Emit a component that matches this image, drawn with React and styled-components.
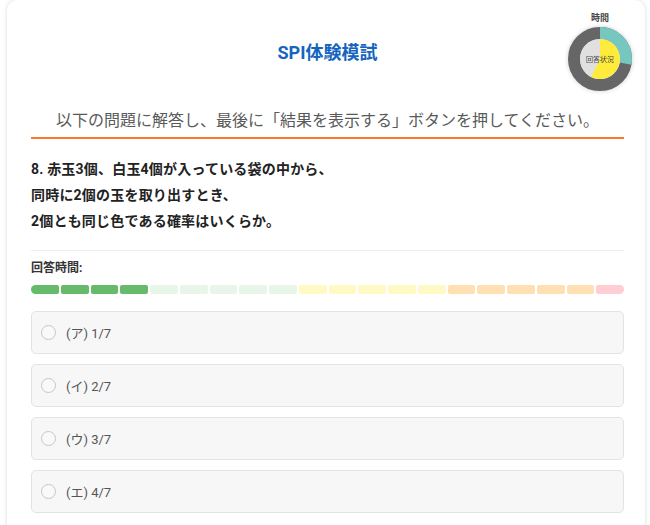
import { createGlobalStyle, styled } from 'styled-components'

const GlobalStyle = createGlobalStyle`
  body {
    margin: 0;
    background: #ffffff;
    font-family: Roboto, 'Noto Sans CJK JP', sans-serif;
    color: #222222;
  }
`

const segments = [
  ...Array(4).fill('#66bb6a'),
  ...Array(5).fill('#e8f5e9'),
  ...Array(5).fill('#fff9c4'),
  ...Array(5).fill('#ffe0b2'),
  '#ffcdd2',
]

const options = ['(ア) 1/7', '(イ) 2/7', '(ウ) 3/7', '(エ) 4/7']

const TimerChart = () => (
  <Timer>
    <TimerLabel>時間</TimerLabel>
    <Donut>
      <svg width="64" height="64" viewBox="0 0 64 64">
        <circle cx="32" cy="32" r="26" fill="none" stroke="#666666" strokeWidth="12" />
        <circle
          cx="32"
          cy="32"
          r="26"
          fill="none"
          stroke="#76c7c0"
          strokeWidth="12"
          strokeDasharray="45.4 200"
          transform="rotate(-90 32 32)"
        />
        <circle cx="32" cy="32" r="20" fill="#e0e0e0" />
        <path d="M32 32 L32 12 A20 20 0 1 1 23.05 49.89 Z" fill="#ffeb3b" />
      </svg>
      <DonutText>回答状況</DonutText>
    </Donut>
  </Timer>
)

export default function App() {
  return (
    <>
      <GlobalStyle />
      <Card>
        <TimerChart />
        <Header>
          <Title>SPI体験模試</Title>
          <Instruction>
            以下の問題に解答し、最後に「結果を表示する」ボタンを押してください。
          </Instruction>
        </Header>

        <Question>
          8. 赤玉3個、白玉4個が入っている袋の中から、
          <br />
          同時に2個の玉を取り出すとき、
          <br />
          2個とも同じ色である確率はいくらか。
        </Question>

        <TimeLabel>回答時間:</TimeLabel>
        <TimeBar>
          {segments.map((color, i) => (
            <Segment key={i} $color={color} />
          ))}
        </TimeBar>

        <OptionList>
          {options.map((option) => (
            <Option key={option}>
              <Radio />
              <OptionText>{option}</OptionText>
            </Option>
          ))}
        </OptionList>
      </Card>
    </>
  )
}

const Card = styled.div`
  position: relative;
  width: 638px;
  margin-left: 7px;
  box-sizing: border-box;
  padding: 0 21px 24px 24px;
  border-radius: 10px;
  background: #ffffff;
  box-shadow: 0 0 4px rgba(0, 0, 0, 0.15);
`

const Timer = styled.div`
  position: absolute;
  top: 12px;
  right: 13px;
  display: flex;
  flex-direction: column;
  align-items: center;
  gap: 2px;
`

const TimerLabel = styled.div`
  font-size: 9px;
  font-weight: 700;
  line-height: 13px;
  color: #444444;
`

const Donut = styled.div`
  position: relative;
  width: 64px;
  height: 64px;
  filter: drop-shadow(0 0 2px rgba(0, 0, 0, 0.2));

  svg {
    display: block;
  }
`

const DonutText = styled.span`
  position: absolute;
  inset: 0;
  display: flex;
  align-items: center;
  justify-content: center;
  font-size: 7px;
  color: #444444;
`

const Header = styled.div`
  padding-top: 40px;
  border-bottom: 2px solid #f57c24;
  text-align: center;
`

const Title = styled.h1`
  margin: 0;
  font-size: 18px;
  line-height: 26px;
  font-weight: 700;
  color: #1565c0;
`

const Instruction = styled.p`
  margin: 43px 0 0;
  padding-bottom: 4px;
  font-size: 16px;
  line-height: 24px;
  color: #5a5a5a;
`

const Question = styled.div`
  margin-top: 17px;
  padding-bottom: 16px;
  border-bottom: 1px solid #eeeeee;
  font-size: 14px;
  font-weight: 700;
  line-height: 26px;
  letter-spacing: 0.2px;
  color: #222222;
`

const TimeLabel = styled.div`
  margin-top: 9px;
  font-size: 12px;
  font-weight: 700;
  line-height: 16px;
  color: #333333;
`

const TimeBar = styled.div`
  display: flex;
  gap: 2px;
  height: 9px;
  margin-top: 9px;
  border-radius: 5px;
  overflow: hidden;
`

const Segment = styled.div`
  flex: 1;
  border-radius: 2px;
  background: ${({ $color }) => $color};
`

const OptionList = styled.div`
  display: flex;
  flex-direction: column;
  gap: 10px;
  margin-top: 17px;
`

const Option = styled.label`
  display: flex;
  align-items: center;
  gap: 10px;
  height: 43px;
  box-sizing: border-box;
  padding: 0 9px;
  border: 1px solid #e3e3e3;
  border-radius: 5px;
  background: #f7f7f7;
  cursor: pointer;
`

const Radio = styled.span`
  width: 15px;
  height: 15px;
  box-sizing: border-box;
  border: 1.5px solid #c6c6c6;
  border-radius: 50%;
  background: #f9f9f9;
`

const OptionText = styled.span`
  font-size: 13px;
  color: #555555;
`
